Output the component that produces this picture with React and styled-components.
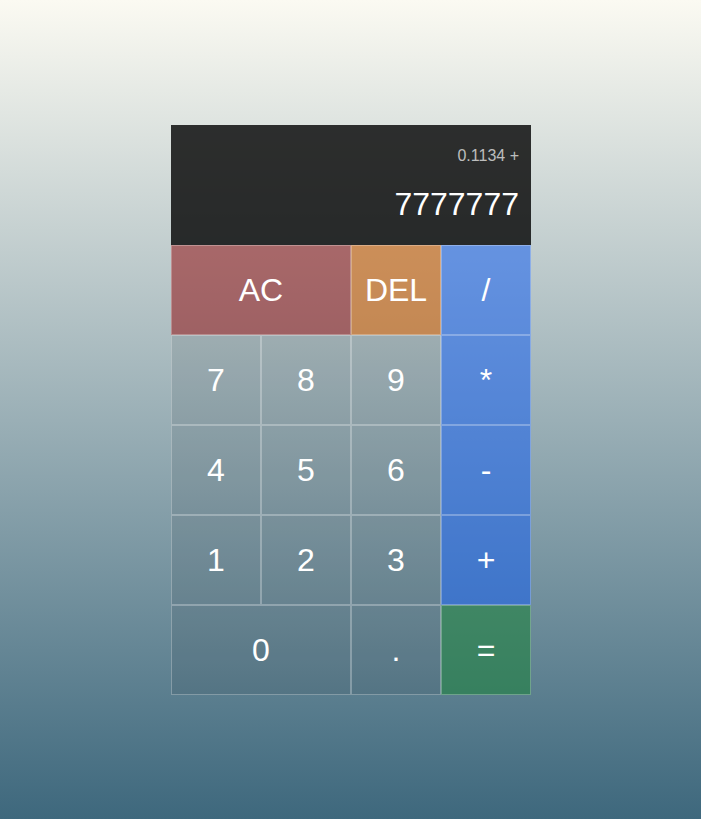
import React from "react";
import styled, { createGlobalStyle } from "styled-components";

const Global = createGlobalStyle`
  *, *::before, *::after { box-sizing: border-box; }
  html, body { margin: 0; padding: 0; }
  body {
    font-family: "Liberation Sans", Arial, sans-serif;
    background: linear-gradient(to bottom, #fbfaf2 0%, #3e687d 100%);
    min-height: 100vh;
  }
`;

const Page = styled.div`
  min-height: 100vh;
  display: flex;
  align-items: center;
  justify-content: center;
  padding-left: 1px;
`;

const Grid = styled.div`
  display: grid;
  grid-template-columns: repeat(4, 90px);
  grid-template-rows: 120px repeat(5, 90px);
`;

const Display = styled.div`
  grid-column: 1 / -1;
  background: rgba(0, 0, 0, 0.8);
  display: flex;
  flex-direction: column;
  align-items: flex-end;
  padding: 22px 12px 0 12px;
  gap: 21px;
`;

const Previous = styled.div`
  color: rgba(255, 255, 255, 0.7);
  font-size: 16px;
`;

const Current = styled.div`
  color: #ffffff;
  font-size: 32px;
`;

const tones = {
  num: "rgba(40, 50, 55, 0.12)",
  clear: "rgba(145, 20, 22, 0.55)",
  del: "rgba(210, 100, 10, 0.6)",
  op: "rgba(22, 96, 240, 0.54)",
  eq: "rgba(30, 130, 60, 0.58)",
};

const Key = styled.button`
  grid-column: span ${(p) => p.$span || 1};
  background: ${(p) => tones[p.$tone || "num"]};
  border: 1px solid rgba(255, 255, 255, 0.28);
  color: #ffffff;
  font-family: "Liberation Sans", Arial, sans-serif;
  font-size: 32px;
  cursor: pointer;
  outline: none;
  padding: 2px 0 0 0;
  margin: 0;
`;

export default function App() {
  return (
    <>
      <Global />
      <Page>
        <Grid>
          <Display>
            <Previous>0.1134 +</Previous>
            <Current>7777777</Current>
          </Display>
          <Key $span={2} $tone="clear">AC</Key>
          <Key $tone="del">DEL</Key>
          <Key $tone="op">/</Key>
          <Key>7</Key>
          <Key>8</Key>
          <Key>9</Key>
          <Key $tone="op">*</Key>
          <Key>4</Key>
          <Key>5</Key>
          <Key>6</Key>
          <Key $tone="op">-</Key>
          <Key>1</Key>
          <Key>2</Key>
          <Key>3</Key>
          <Key $tone="op">+</Key>
          <Key $span={2}>0</Key>
          <Key>.</Key>
          <Key $tone="eq">=</Key>
        </Grid>
      </Page>
    </>
  );
}
